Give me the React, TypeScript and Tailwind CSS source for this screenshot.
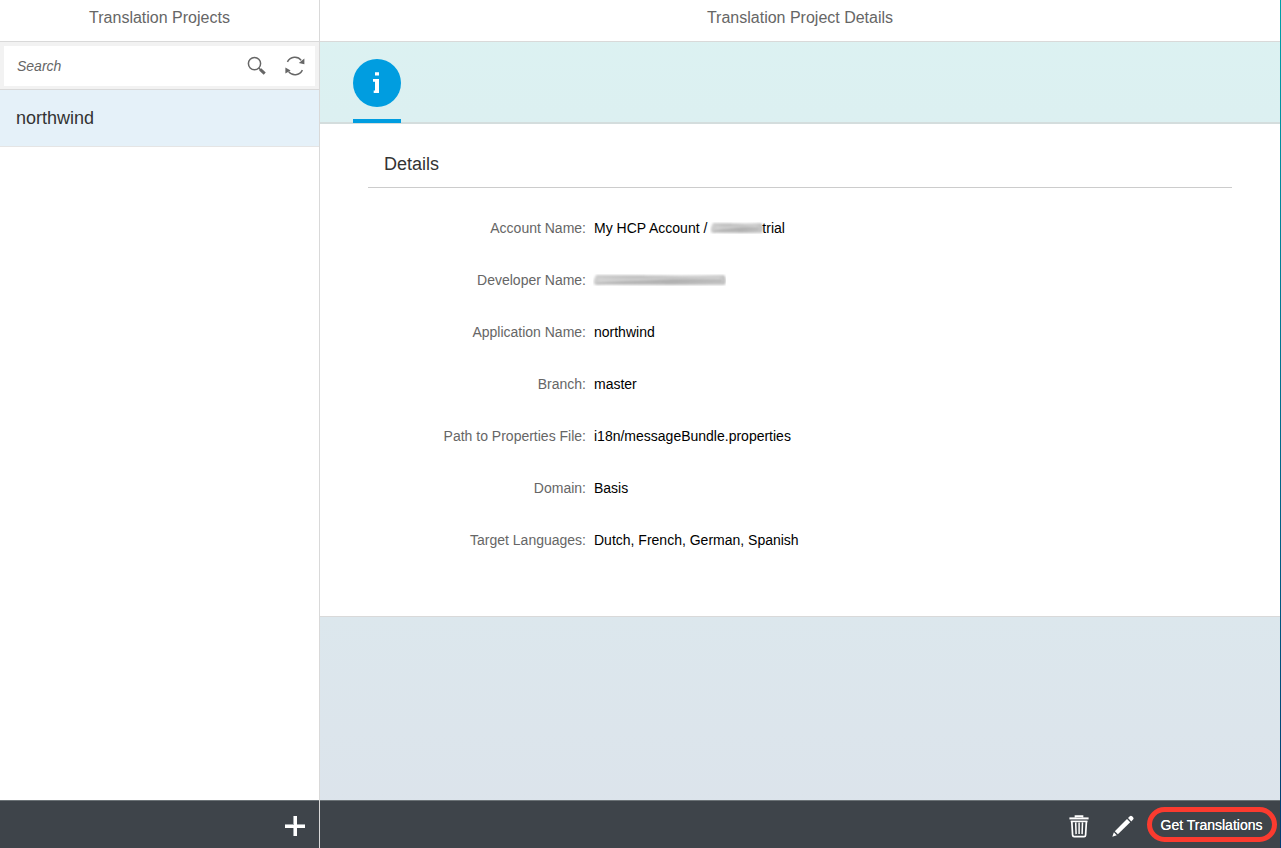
import type { ReactNode } from "react";

function SearchIcon() {
  return (
    <svg width="20" height="20" viewBox="0 0 20 20" fill="none" stroke="#666">
      <circle cx="7.5" cy="7.6" r="6.1" strokeWidth="1.5" />
      <path d="M11.8 12l2 2" strokeWidth="1.6" />
      <path d="M13.2 13.3l4.5 4.3" strokeWidth="3" />
    </svg>
  );
}

function RefreshIcon() {
  return (
    <svg width="22" height="20" viewBox="0 0 22 20" fill="none" stroke="#666" strokeWidth="1.5">
      <path d="M3.4 5.9C6.4.2 13.8-.2 17.2 4.4" />
      <path d="M18.4 14.1C15.4 19.8 8.2 20.2 4.6 15.6" />
      <path d="M20.4 2.4v5.8l-5.6-1.3z" fill="#666" stroke="none" />
      <path d="M1.4 17.5v-6l5.2 3z" fill="#666" stroke="none" />
    </svg>
  );
}

function TrashIcon() {
  return (
    <svg width="20" height="24" viewBox="0 0 20 24" fill="none" stroke="#fff">
      <path d="M.4 4.4h19.2" strokeWidth="2" />
      <path d="M6.5 3.4V2.2h7v1.2" strokeWidth="1.7" />
      <path d="M1.7 7.4h16.8" strokeWidth="1.6" />
      <path d="M2.8 7.4l.8 13.8c.1 1 .5 1.5 1.5 1.5h10c1 0 1.4-.5 1.5-1.500L17.4 7.4" strokeWidth="1.7" />
      <path d="M6.7 8.4l.4 11.7M10.1 8.4v11.700M13.5 8.4l-.4 11.7" strokeWidth="1.5" />
    </svg>
  );
}

function PencilIcon() {
  return (
    <svg width="24" height="24" viewBox="0 0 24 24" fill="#fff">
      <path d="M1.3 22.8l1.600-4.500 2.900 2.900z" />
      <path d="M3.800 17.200L16 5l3.200 3.200L6.900 20.300z" />
      <path d="M17 4l1.800-1.800q1.200-1 2.300.1l1 1q1.100 1.200 0 2.300l-1.800 1.800z" />
    </svg>
  );
}

function PlusIcon() {
  return (
    <svg width="22" height="22" viewBox="0 0 22 22">
      <path d="M9 1h4v8h8v4h-8v8H9v-8H1V9h8z" fill="#a5abaf" />
      <path d="M10 1h3v9h8v3h-8v8h-3v-8H1v-3h9z" fill="#fff" />
    </svg>
  );
}

function SmudgedName({ width, id }: { width: number; id: string }) {
  return (
    <svg className="block" width={width} height="16" viewBox={`0 0 ${width} 16`}>
      <defs>
        <linearGradient id={id} x1="0" y1="0" x2="1" y2=".1">
          <stop offset="0" stopColor="#d2d2d2" />
          <stop offset=".3" stopColor="#c3c3c3" />
          <stop offset=".65" stopColor="#b9b9b9" />
          <stop offset="1" stopColor="#c9c9c9" />
        </linearGradient>
        <filter id={`${id}-soft`}>
          <feGaussianBlur stdDeviation=".8" />
        </filter>
      </defs>
      <g filter={`url(#${id}-soft)`} fill="none">
        <path
          d={`M3 3Q${width / 4} 3 ${width / 2} 3.5T${width - 2} 3Q${width} 7 ${width - 1} 13Q${width * 0.75} 13 ${width / 2} 13T1 12.5Q0 8 3 3Z`}
          fill={`url(#${id})`}
        />
        <path d={`M3 12Q${width / 4} 10 ${width / 2} 9.5T${width - 4} 9`} stroke="#a2a2a2" />
        <path d={`M6 8Q${width / 3} 8 ${width / 2} 6.5T${width - 6} 6`} stroke="#dedede" />
        <path d={`M5 4H${width * 0.4}M${width * 0.55} 12H${width - 5}`} stroke="#a5a5a5" strokeDasharray="1 2" />
        <path d={`M${width - 2} 4Q${width} 8 ${width - 2} 12`} stroke="#a5a5a5" />
      </g>
    </svg>
  );
}

const fields: { label: string; value: ReactNode }[] = [
  {
    label: "Account Name:",
    value: (
      <span className="flex items-center">
        My HCP Account /
        <span className="ml-[3px] w-[52px] shrink-0">
          <SmudgedName width={53} id="account" />
        </span>
        trial
      </span>
    ),
  },
  {
    label: "Developer Name:",
    value: (
      <span className="-ml-px block">
        <SmudgedName width={133} id="developer" />
      </span>
    ),
  },
  { label: "Application Name:", value: "northwind" },
  { label: "Branch:", value: "master" },
  { label: "Path to Properties File:", value: "i18n/messageBundle.properties" },
  { label: "Domain:", value: "Basis" },
  { label: "Target Languages:", value: "Dutch, French, German, Spanish" },
];

function ProjectList() {
  return (
    <aside className="flex w-80 shrink-0 flex-col border-r border-[#d9d9d9] bg-white">
      <header className="flex h-[42px] shrink-0 justify-center border-b border-[#d9d9d9] pt-[6px] text-base text-[#666]">
        Translation Projects
      </header>
      <div className="h-12 shrink-0 border-b border-[#d9d9d9] bg-[#f2f2f2] pt-1 pr-1 pl-1">
        <div className="flex h-10 items-center bg-white pl-[13px]">
          <span className="flex-1 text-sm text-[#666] italic">Search</span>
          <span className="mr-[17px]">
            <SearchIcon />
          </span>
          <span className="mr-[9px]">
            <RefreshIcon />
          </span>
        </div>
      </div>
      <div className="flex h-[57px] shrink-0 items-center border-b border-[#e5e5e5] bg-[#e5f1f9] pl-4 text-lg text-[#333]">
        northwind
      </div>
      <div className="flex-1" />
      <footer className="flex h-12 shrink-0 items-center justify-end border-t border-[#6b7276] bg-[#3e444a] pt-[2px] pr-[13px]">
        <PlusIcon />
      </footer>
    </aside>
  );
}

function ProjectDetails() {
  return (
    <main className="flex min-w-0 flex-1 flex-col bg-linear-to-b from-[#dcf2f2] to-[#dce3eb]">
      <header className="flex h-[42px] shrink-0 justify-center border-b border-[#d9d9d9] bg-white pt-[6px] text-base text-[#666]">
        Translation Project Details
      </header>
      <nav className="flex h-[82px] shrink-0 flex-col border-b-2 border-[#d4dddd] pt-[17px] pl-[33px]">
        <div className="flex size-12 shrink-0 items-center justify-center rounded-full bg-[#009de0]">
          <svg width="8" height="22" viewBox="0 0 8 22" fill="#fff">
            <path d="M2 .3h4v3.2H2zM0 7h6v14H.7v-2.5H2V9.8H0z" />
          </svg>
        </div>
        <div className="mt-3 h-1 w-12 shrink-0 bg-[#009de0]" />
      </nav>
      <section className="h-[493px] shrink-0 border-b border-[#d9d9d9] bg-white px-12 pt-4">
        <h2 className="flex h-12 items-center border-b border-[#ccc] pl-4 text-lg text-[#333]">Details</h2>
        <dl className="pt-[14px]">
          {fields.map((field) => (
            <div key={field.label} className="flex h-[52px] items-center gap-2 text-sm">
              <dt className="w-[218px] text-right text-[#666]">{field.label}</dt>
              <dd className="text-black">{field.value}</dd>
            </div>
          ))}
        </dl>
      </section>
      <div className="flex-1" />
      <footer className="flex h-12 shrink-0 items-center justify-end border-t border-[#6b7276] bg-[#3e444a] pr-[3px]">
        <span className="mt-[3px] mr-[22px]">
          <TrashIcon />
        </span>
        <span className="mt-[3px] mr-[12px]">
          <PencilIcon />
        </span>
        <button className="h-[35px] w-[130px] rounded-full border-5 border-[#fb3b2f] pr-px text-sm whitespace-nowrap text-white [text-shadow:0_0_.5px_white]">
          Get Translations
        </button>
      </footer>
    </main>
  );
}

export default function App() {
  return (
    <div className="flex h-[848px] w-[1281px] overflow-hidden font-['Liberation_Sans',Arial,sans-serif]">
      <ProjectList />
      <ProjectDetails />
      <div className="w-px shrink-0 bg-linear-to-b from-[#009fa8] to-[#003b70]" />
    </div>
  );
}
